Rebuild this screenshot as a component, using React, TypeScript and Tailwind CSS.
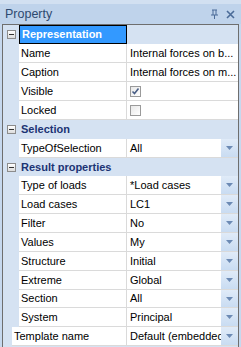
import React from 'react';

type Row =
    | { kind: 'cat'; label: string; selected?: boolean }
    | { kind: 'prop'; name: string; value?: string; check?: boolean; combo?: boolean; outer?: boolean };

const rows: Row[] = [
    { kind: 'cat', label: 'Representation', selected: true },
    { kind: 'prop', name: 'Name', value: 'Internal forces on b...' },
    { kind: 'prop', name: 'Caption', value: 'Internal forces on m...' },
    { kind: 'prop', name: 'Visible', check: true },
    { kind: 'prop', name: 'Locked', check: false },
    { kind: 'cat', label: 'Selection' },
    { kind: 'prop', name: 'TypeOfSelection', value: 'All', combo: true },
    { kind: 'cat', label: 'Result properties' },
    { kind: 'prop', name: 'Type of loads', value: '*Load cases', combo: true },
    { kind: 'prop', name: 'Load cases', value: 'LC1', combo: true },
    { kind: 'prop', name: 'Filter', value: 'No', combo: true },
    { kind: 'prop', name: 'Values', value: 'My', combo: true },
    { kind: 'prop', name: 'Structure', value: 'Initial', combo: true },
    { kind: 'prop', name: 'Extreme', value: 'Global', combo: true },
    { kind: 'prop', name: 'Section', value: 'All', combo: true },
    { kind: 'prop', name: 'System', value: 'Principal', combo: true },
    { kind: 'prop', name: 'Template name', value: 'Default (embedded)', combo: true, outer: true },
];

const MinusBox = () => (
    <div className="w-[9px] h-[9px] border border-[#8c8c8c] bg-gradient-to-b from-white to-[#dcdcdc] flex items-center justify-center">
        <div className="w-[5px] h-px bg-[#333]" />
    </div>
);

const CheckBox = ({ checked }: { checked: boolean }) => (
    <div className="w-[11px] h-[11px] border border-[#9a9a9a] bg-gradient-to-br from-[#e8e8e8] to-white flex items-center justify-center">
        {checked && (
            <svg width="9" height="9" viewBox="0 0 9 9">
                <path d="M1.5 4.5 L3.5 6.5 L7.5 1.5" stroke="#4a5f86" strokeWidth="1.6" fill="none" />
            </svg>
        )}
    </div>
);

const ComboButton = () => (
    <div className="absolute right-0 top-0 bottom-0 w-[17px] bg-gradient-to-b from-[#e0ebf8] to-[#c9dcf2] flex items-center justify-center">
        <svg width="7" height="4" viewBox="0 0 7 4">
            <path d="M0 0 H7 L3.5 4 Z" fill="#6c8ab4" />
        </svg>
    </div>
);

export default function App() {
    return (
        <div
            className="w-[241px] h-[347px] overflow-hidden bg-[#c6d8ee] flex flex-col text-[11px] text-black"
            style={{ fontFamily: '"Liberation Sans", Arial, sans-serif' }}
        >
            <div className="h-[4px] bg-[#d2e0f1]" />
            <div className="h-[20px] flex items-center pl-[5px] pr-[6px] bg-[#bfd3eb]">
                <span className="text-[12.5px] text-[#2e4a70] flex-1">Property</span>
                <svg width="9" height="10" viewBox="0 0 9 10" className="mr-[7px]">
                    <path d="M2 1 H7 M3 1 V6 M6 1 V6 M1 6 H8 M4.5 6 V10" stroke="#4b6b98" strokeWidth="1" fill="none" />
                </svg>
                <svg width="9" height="9" viewBox="0 0 9 9">
                    <path d="M1 1 L8 8 M8 1 L1 8" stroke="#4b6b98" strokeWidth="1.6" fill="none" />
                </svg>
            </div>
            <div className="mx-[2px] border-l border-t border-r border-[#6e6e6e] flex-1 bg-[#d5e2f2] flex flex-col">
                {rows.map((r, i) => {
                    const h = i === 7 || i === 14 ? 'h-[18px]' : 'h-[19px]';
                    if (r.kind === 'cat') {
                        return (
                            <div key={i} className={`${h} flex items-center shrink-0`}>
                                <div className="w-[16px] flex justify-center">
                                    <MinusBox />
                                </div>
                                {r.selected ? (
                                    <div className="w-[108px] h-full bg-[#3399ff] border border-black flex items-center pl-[2px] font-bold text-white">
                                        {r.label}
                                    </div>
                                ) : (
                                    <div className="pl-[2px] font-bold text-[#1c3474]">{r.label}</div>
                                )}
                            </div>
                        );
                    }
                    return (
                        <div key={i} className={`${h} flex shrink-0`}>
                            <div className={r.outer ? 'w-[9px]' : 'w-[16px]'} />
                            <div
                                className={`${r.outer ? 'w-[115px] pl-[2px]' : 'w-[108px] pl-[2px]'} bg-white border-b border-r border-[#dadada] flex items-center whitespace-nowrap overflow-hidden`}
                            >
                                {r.name}
                            </div>
                            <div className="flex-1 relative bg-white border-b border-[#dadada] flex items-center pl-[3px] whitespace-nowrap overflow-hidden">
                                {r.check !== undefined ? <CheckBox checked={r.check} /> : r.value}
                                {r.combo && <ComboButton />}
                            </div>
                        </div>
                    );
                })}
            </div>
        </div>
    );
}
